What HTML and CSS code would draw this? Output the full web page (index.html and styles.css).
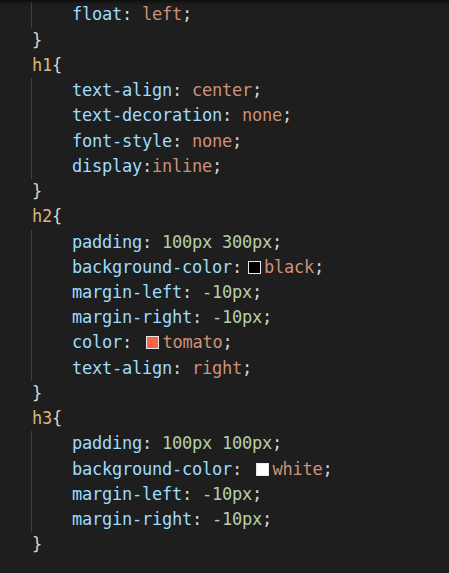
FILE: index.html
```html
<!DOCTYPE html>
<html>
<head>
<meta charset="utf-8">
<link rel="stylesheet" href="styles.css">
</head>
<body>
<div class="editor">
  <div class="shadow"></div>
  <div class="code">
    <div class="body">
      <div class="ln"><span class="p">float</span><span class="d">: </span><span class="v">left</span><span class="d">;</span></div>
    </div>
    <div class="ln top"><span class="d">}</span></div>

    <div class="ln top"><span class="s">h1</span><span class="d">{</span></div>
    <div class="body">
      <div class="ln"><span class="p">text-align</span><span class="d">: </span><span class="v">center</span><span class="d">;</span></div>
      <div class="ln"><span class="p">text-decoration</span><span class="d">: </span><span class="v">none</span><span class="d">;</span></div>
      <div class="ln"><span class="p">font-style</span><span class="d">: </span><span class="v">none</span><span class="d">;</span></div>
      <div class="ln"><span class="p">display</span><span class="d">:</span><span class="v">inline</span><span class="d">;</span></div>
    </div>
    <div class="ln top"><span class="d">}</span></div>

    <div class="ln top"><span class="s">h2</span><span class="d">{</span></div>
    <div class="body">
      <div class="ln"><span class="p">padding</span><span class="d">: </span><span class="n">100px 300px</span><span class="d">;</span></div>
      <div class="ln"><span class="p">background-color</span><span class="d">:</span><span class="sw sw-black sw-wide"></span><span class="v">black</span><span class="d">;</span></div>
      <div class="ln"><span class="p">margin-left</span><span class="d">: </span><span class="n">-10px</span><span class="d">;</span></div>
      <div class="ln"><span class="p">margin-right</span><span class="d">: </span><span class="n">-10px</span><span class="d">;</span></div>
      <div class="ln"><span class="p">color</span><span class="d">: </span><span class="sw sw-tomato"></span><span class="v">tomato</span><span class="d">;</span></div>
      <div class="ln"><span class="p">text-align</span><span class="d">: </span><span class="v">right</span><span class="d">;</span></div>
    </div>
    <div class="ln top"><span class="d">}</span></div>

    <div class="ln top"><span class="s">h3</span><span class="d">{</span></div>
    <div class="body">
      <div class="ln"><span class="p">padding</span><span class="d">: </span><span class="n">100px 100px</span><span class="d">;</span></div>
      <div class="ln"><span class="p">background-color</span><span class="d">: </span><span class="sw sw-white"></span><span class="v">white</span><span class="d">;</span></div>
      <div class="ln"><span class="p">margin-left</span><span class="d">: </span><span class="n">-10px</span><span class="d">;</span></div>
      <div class="ln"><span class="p">margin-right</span><span class="d">: </span><span class="n">-10px</span><span class="d">;</span></div>
    </div>
    <div class="ln top"><span class="d">}</span></div>
  </div>
</div>
</body>
</html>
```

FILE: styles.css
```css
html, body {
  margin: 0;
  padding: 0;
  background: #1e1e1e;
}

.editor {
  position: relative;
  width: 449px;
  height: 573px;
  overflow: hidden;
  background: #1e1e1e;
}

.shadow {
  position: absolute;
  left: 0;
  top: 0;
  right: 0;
  height: 6px;
  box-shadow: inset 0 6px 6px -6px #000;
  pointer-events: none;
}

.code {
  padding-top: 2.4px;
  padding-left: 31px;
  font-family: "DejaVu Sans Mono", "Liberation Mono", monospace;
  font-size: 17px;
  letter-spacing: -0.24px;
  line-height: 25.24px;
  color: #d4d4d4;
}

.ln {
  height: 25.24px;
  white-space: pre;
}

.top {
  padding-left: 1px;
}

.body {
  border-left: 1px solid #404040;
  padding-left: 40px;
}

.p { color: #9cdcfe; }
.v { color: #ce9178; }
.n { color: #b5cea8; }
.s { color: #d7ba7d; }
.d { color: #d4d4d4; }

.sw {
  display: inline-block;
  box-sizing: border-box;
  width: 13px;
  height: 13px;
  margin: 0 3.5px 0 4px;
  border: 1px solid #e8e8e8;
  vertical-align: -1px;
}

.sw-wide { margin-left: 6px; margin-right: 3px; }
.sw-black { background: #000; }
.sw-tomato { background: #ff6347; }
.sw-white { background: #fff; }
```
